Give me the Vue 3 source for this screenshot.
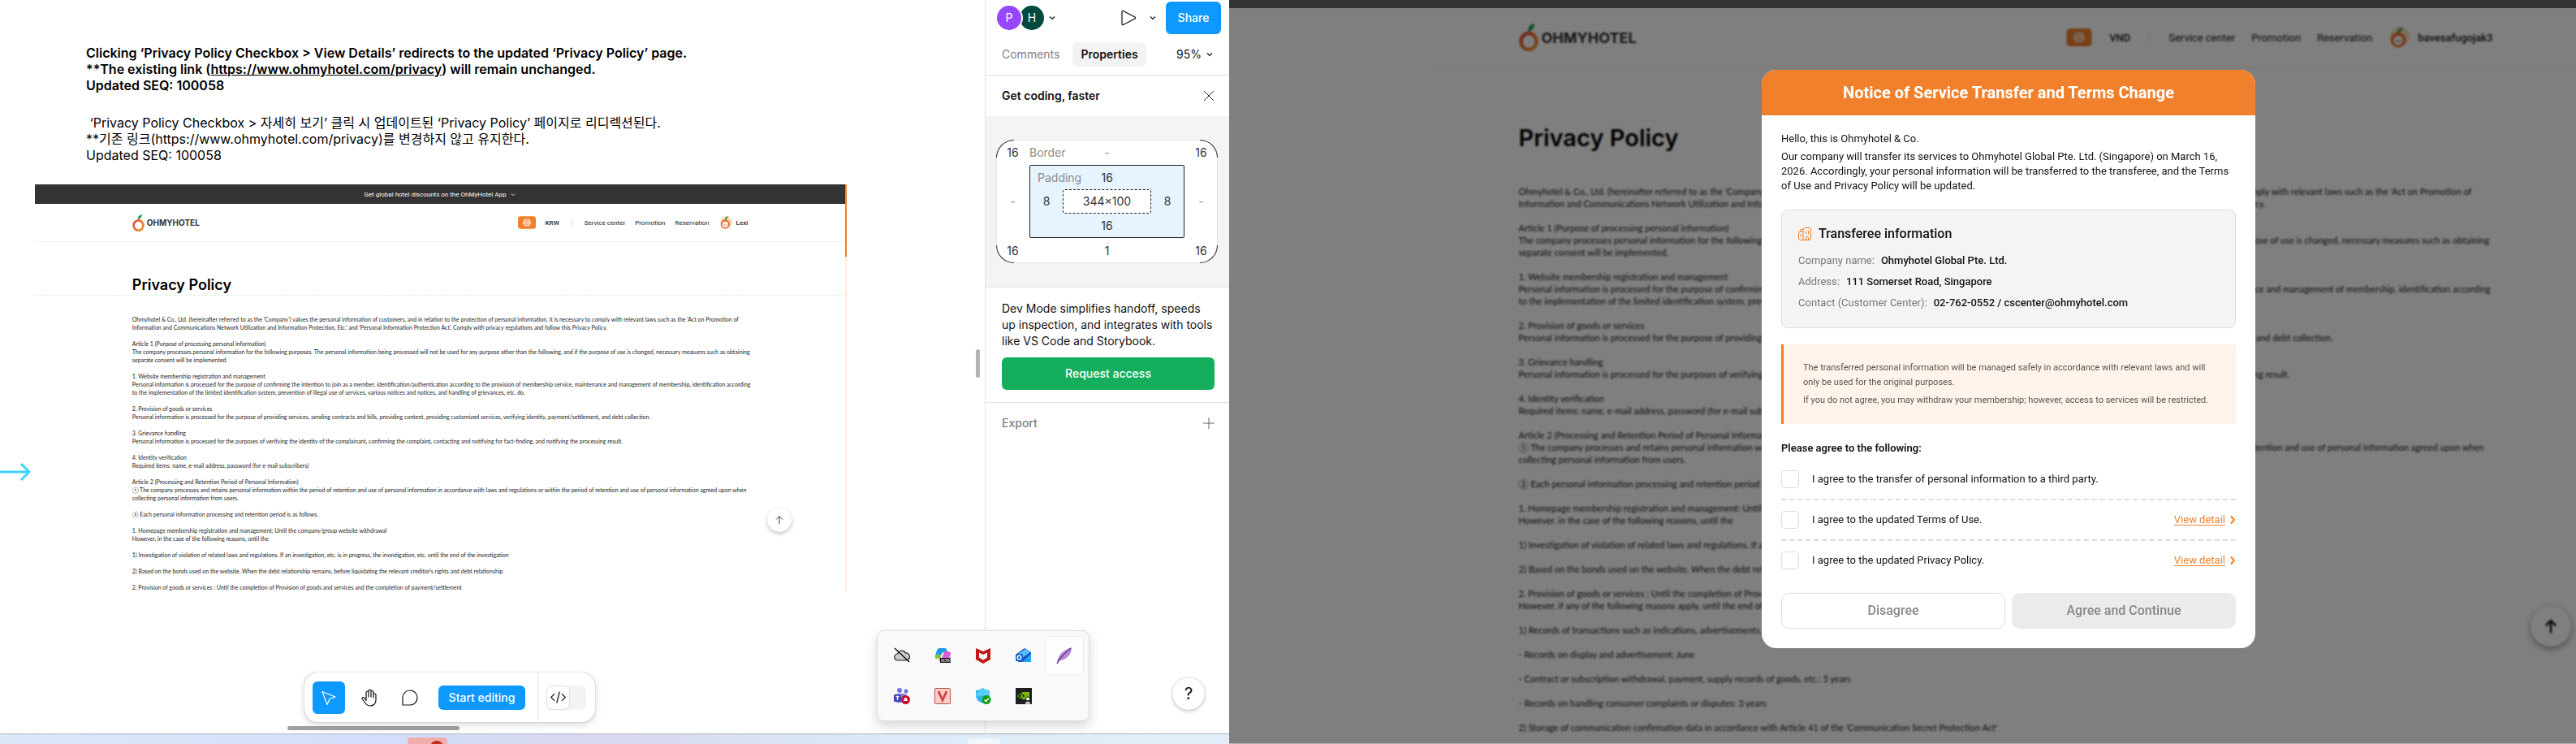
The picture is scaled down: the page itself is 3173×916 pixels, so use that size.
<script setup>
import { ref, computed } from 'vue';

const policyLines = [
  "Ohmyhotel & Co., Ltd. (hereinafter referred to as the 'Company') values the personal information of customers, and in relation to the protection of personal information, it is necessary to comply with relevant laws such as the 'Act on Promotion of",
  "Information and Communications Network Utilization and Information Protection, Etc.' and 'Personal Information Protection Act'. Comply with privacy regulations and follow this Privacy Policy.",
  "",
  "Article 1 (Purpose of processing personal information)",
  "The company processes personal information for the following purposes. The personal information being processed will not be used for any purpose other than the following, and if the purpose of use is changed, necessary measures such as obtaining",
  "separate consent will be implemented.",
  "",
  "1. Website membership registration and management",
  "Personal information is processed for the purpose of confirming the intention to join as a member, identification/authentication according to the provision of membership service, maintenance and management of membership, identification according",
  "to the implementation of the limited identification system, prevention of illegal use of services, various notices and notices, and handling of grievances, etc. do.",
  "",
  "2. Provision of goods or services",
  "Personal information is processed for the purpose of providing services, sending contracts and bills, providing content, providing customized services, verifying identity, payment/settlement, and debt collection.",
  "",
  "3. Grievance handling",
  "Personal information is processed for the purposes of verifying the identity of the complainant, confirming the complaint, contacting and notifying for fact-finding, and notifying the processing result.",
  "",
  "4. Identity verification",
  "Required items: name, e-mail address, password (for e-mail subscribers)",
  "",
  "Article 2 (Processing and Retention Period of Personal Information)",
  "① The company processes and retains personal information within the period of retention and use of personal information in accordance with laws and regulations or within the period of retention and use of personal information agreed upon when",
  "collecting personal information from users.",
  "",
  "② Each personal information processing and retention period is as follows.",
  "",
  "1. Homepage membership registration and management: Until the company/group website withdrawal",
  "However, in the case of the following reasons, until the",
  "",
  "1) Investigation of violation of related laws and regulations. If an investigation, etc. is in progress, the investigation, etc. until the end of the investigation",
  "",
  "2) Based on the bonds used on the website. When the debt relationship remains, before liquidating the relevant creditor's rights and debt relationship",
  "",
  "2. Provision of goods or services : Until the completion of Provision of goods and services and the completion of payment/settlement",
  "However, if any of the following reasons apply, until the end of the period",
  "",
  "1) Records of transactions such as indications, advertisements, contracts",
  "",
  "- Records on display and advertisement: June",
  "",
  "- Contract or subscription withdrawal, payment, supply records of goods, etc.: 5 years",
  "",
  "- Records on handling consumer complaints or disputes: 3 years",
  "",
  "2) Storage of communication confirmation data in accordance with Article 41 of the 'Communication Secret Protection Act'"
];

const previewText = computed(() => policyLines.slice(0, 34).join('\n'));
const fullText = computed(() => policyLines.join('\n'));

const navLinks = ['Service center', 'Promotion', 'Reservation'];

const transferee = [
  { label: 'Company name:', value: 'Ohmyhotel Global Pte. Ltd.' },
  { label: 'Address:', value: '111 Somerset Road, Singapore' },
  { label: 'Contact (Customer Center):', value: '02-762-0552 / cscenter@ohmyhotel.com' }
];

const agreements = ref([
  { id: 'transfer', text: 'I agree to the transfer of personal information to a third party.', detail: false, checked: false },
  { id: 'terms', text: 'I agree to the updated Terms of Use.', detail: true, checked: false },
  { id: 'privacy', text: 'I agree to the updated Privacy Policy.', detail: true, checked: false }
]);

const allAgreed = computed(() => agreements.value.every((item) => item.checked));
</script>

<template>
  <div class="desktop">
    <!-- shared logo symbols -->
    <svg class="symbols" aria-hidden="true">
      <defs>
        <linearGradient id="peel" x1="0" y1="0" x2="1" y2="1">
          <stop offset="0" stop-color="#e2483a" />
          <stop offset="1" stop-color="#f49a2c" />
        </linearGradient>
        <symbol id="orange" viewBox="0 0 24 34">
          <ellipse cx="12" cy="22" rx="9.5" ry="10" fill="none" stroke="url(#peel)" stroke-width="4.5" />
          <path d="M11 9C11 4 14 1 19 0C19 5 17 8 12 10Z" fill="#1f9b50" />
        </symbol>
        <symbol id="globe" viewBox="0 0 34 24">
          <rect width="34" height="24" rx="5" fill="#f0802b" />
          <circle cx="17" cy="12" r="7.5" fill="#fff" />
          <path d="M9.500 12H24.500M17 4.500V19.500M10.500 8.500H23.500M10.500 15.500H23.500" stroke="#f0802b" stroke-width="1" />
          <ellipse cx="17" cy="12" rx="3.500" ry="7.500" fill="none" stroke="#f0802b" stroke-width="1" />
        </symbol>
        <symbol id="face" viewBox="0 0 24 24">
          <circle cx="13" cy="11" r="11" fill="#fbd9b8" />
          <circle cx="11" cy="15" r="8.500" fill="#f06a2b" />
          <circle cx="11" cy="15.500" r="5.500" fill="#fff3ea" />
          <path d="M8.500 16q1 1.500 2 0M12 16q1 1.500 2 0" fill="none" stroke="#444" stroke-width="1" />
          <path d="M10 7C10 3 12 1 16 0C16 4 14 6 11 8Z" fill="#5aa545" />
        </symbol>
      </defs>
    </svg>

    <section class="editor">
      <div class="workspace">
        <main class="canvas">
          <div class="note bold">
            <p>Clicking ‘Privacy Policy Checkbox &gt; View Details’ redirects to the updated ‘Privacy Policy’ page.</p>
            <p>**The existing link (<a href="#">https://www.ohmyhotel.com/privacy</a>) will remain unchanged.</p>
            <p>Updated SEQ: 100058</p>
          </div>
          <div class="note">
            <p>&nbsp;‘Privacy Policy Checkbox &gt; 자세히 보기’ 클릭 시 업데이트된 ‘Privacy Policy’ 페이지로 리디렉션된다.</p>
            <p>**기존 링크(https://www.ohmyhotel.com/privacy)를 변경하지 않고 유지한다.</p>
            <p>Updated SEQ: 100058</p>
          </div>

          <div class="frame">
            <div class="site small">
              <div class="promo-bar">Get global hotel discounts on the OhMyHotel App
                <svg viewBox="0 0 8 6"><path d="M1 1.500L4 4.500L7 1.500" /></svg>
              </div>
              <header class="site-header">
                <div class="site-inner">
                  <span class="logo"><svg><use href="#orange" /></svg>OHMYHOTEL</span>
                  <nav>
                    <svg class="globe"><use href="#globe" /></svg>
                    <b>KRW</b>
                    <i class="divider"></i>
                    <a v-for="link in navLinks" :key="link" href="#">{{ link }}</a>
                    <span class="user"><svg class="face"><use href="#face" /></svg>Lexi</span>
                  </nav>
                </div>
              </header>
              <div class="article">
                <h2 class="site-inner">Privacy Policy</h2>
                <p class="site-inner policy">{{ previewText }}</p>
              </div>
              <button class="to-top" aria-label="Back to top">
                <svg viewBox="0 0 16 16"><path d="M8 14V3M3.500 7.500L8 3L12.500 7.500" /></svg>
              </button>
            </div>
          </div>

          <svg class="arrow" viewBox="0 0 38 24"><path d="M0 12H36M26 2L36 12L26 22" /></svg>
          <div class="scroll-y"></div>
          <div class="scroll-x"></div>

          <div class="toolbar">
            <button class="tool active" aria-label="Move">
              <svg viewBox="0 0 24 24"><path d="M4 4.500L20 11L13 13.500L10 20.500Z" /></svg>
            </button>
            <button class="tool" aria-label="Hand">
              <svg viewBox="0 0 24 24"><path d="M8 13V5.500a1.500 1.500 0 0 1 3 0V11V3.500a1.500 1.500 0 0 1 3 0V11V5a1.500 1.500 0 0 1 3 0V12V8.500a1.500 1.500 0 0 1 3 0V15c0 4-3 7-7 7c-3 0-4.500-1-6-3.500L3 13.500c-.5-1.500 1.500-2.500 2.500-1.500L8 15.500Z" /></svg>
            </button>
            <button class="tool" aria-label="Comment">
              <svg viewBox="0 0 24 24"><path d="M3 21V12a9 9 0 1 1 9 9Z" /></svg>
            </button>
            <button class="start">Start editing</button>
            <i></i>
            <button class="dev" aria-label="Dev Mode">
              <span><svg viewBox="0 0 24 24"><path d="M7 7L2 12L7 17M17 7L22 12L17 17M14 4L10 20" /></svg></span>
            </button>
          </div>
        </main>

        <aside class="sidebar">
          <div class="side-head">
            <div class="row">
              <span class="avatar p">P</span>
              <span class="avatar h">H</span>
              <svg class="chev" viewBox="0 0 8 8"><path d="M1 2.500L4 5.500L7 2.500" /></svg>
              <button class="play" aria-label="Present">
                <svg viewBox="0 0 20 20"><path d="M2 2.500Q2 .8 3.500 1.500L18 9Q19 10 18 11L3.500 18.500Q2 19.200 2 17.500Z" /></svg>
              </button>
              <svg class="chev" viewBox="0 0 8 8"><path d="M1 2.500L4 5.500L7 2.500" /></svg>
              <button class="share">Share</button>
            </div>
            <div class="row tabs">
              <button>Comments</button>
              <button class="on">Properties</button>
              <button class="zoom">95%
                <svg class="chev" viewBox="0 0 8 8"><path d="M1 2.500L4 5.500L7 2.500" /></svg>
              </button>
            </div>
          </div>

          <div class="side-title">
            <strong>Get coding, faster</strong>
            <button aria-label="Close"><svg viewBox="0 0 14 14"><path d="M1 1L13 13M13 1L1 13" /></svg></button>
          </div>

          <div class="box-area">
            <div class="box-model">
              <i class="corner tl"></i><i class="corner tr"></i><i class="corner bl"></i><i class="corner br"></i>
              <span>16</span>
              <div class="border-row"><em>Border</em><em>-</em></div>
              <span>16</span>
              <em>-</em>
              <div class="padding-box">
                <div class="padding-row"><em>Padding</em><span>16</span></div>
                <span>8</span>
                <span class="size">344×100</span>
                <span>8</span>
                <div class="padding-row"><i></i><span>16</span></div>
              </div>
              <em>-</em>
              <span>16</span>
              <span>1</span>
              <span>16</span>
            </div>
          </div>

          <div class="handoff">
            <p>Dev Mode simplifies handoff, speeds up inspection, and integrates with tools like VS Code and Storybook.</p>
            <button>Request access</button>
          </div>

          <div class="export">
            <span>Export</span>
            <button aria-label="Add export"><svg viewBox="0 0 14 14"><path d="M7 0V14M0 7H14" /></svg></button>
          </div>
        </aside>

        <div class="tray">
          <span><svg viewBox="0 0 20 20"><path d="M5 16a4 4 0 0 1-.5-8A5.500 5.500 0 0 1 14.500 7A4.500 4.500 0 0 1 15.500 16Z" fill="#c9c9c9" stroke="#222" stroke-width="1.2" /><path d="M1 1L19 18" stroke="#111" stroke-width="1.5" /></svg></span>
          <span><svg viewBox="0 0 20 20">
            <path d="M6 1H13Q15 1 15.500 5L11 6Q9 6 8 11L7 14H3Q0 14 1 10L3 4Q4 1 6 1Z" fill="#1c9be8" />
            <path d="M1 9L8 9L7 14H3Q0 14 1 9Z" fill="#8fc33a" />
            <path d="M12 5H17Q20 5 20 8L18 14H9Z" fill="#d85bd5" />
            <path d="M5 14H10L8 18Q6 18 5 14Z" fill="#f59a2e" />
            <rect x="7" y="13" width="13" height="6" fill="#111" /><text x="8" y="18" font-size="5" fill="#fff">M365</text></svg></span>
          <span><svg viewBox="0 0 20 20"><path d="M1 1L10 5L19 1V15L10 20L1 15ZM5 6.500V12.500L10 15.500L15 12.500V6.500L10 9Z" fill="#c01818" fill-rule="evenodd" /></svg></span>
          <span><svg viewBox="0 0 20 20"><path d="M1 8L11 1L19 6V18H3Z" fill="#1d4fc4" /><path d="M3 8L12 2L18 6L8 13Z" fill="#4fc3ff" /><path d="M8 18L19 8V18Z" fill="#27a3f5" /><rect x="0" y="8" width="9" height="9" rx="1.500" fill="#0f5fd0" /><circle cx="4.500" cy="12.500" r="2.300" fill="none" stroke="#fff" stroke-width="1.400" /></svg></span>
          <span class="hover"><svg viewBox="0 0 20 20"><path d="M1 19C2 9 8 4 19 0C19 10 12 15 3 17Z" fill="#b08ad0" /><path d="M1 20Q6 10 18 1" fill="none" stroke="#7a2fa8" stroke-width="1.500" /></svg></span>
          <span><svg viewBox="0 0 20 20"><circle cx="7" cy="3" r="3" fill="#6f74e0" /><circle cx="15" cy="4" r="2.500" fill="#6f74e0" /><rect x="2" y="7" width="14" height="11" rx="3" fill="#7b83eb" /><rect x="0" y="8" width="9" height="9" rx="1" fill="#3f45b5" /><path d="M2.500 10.500H6.500M4.500 10.500V15" stroke="#fff" stroke-width="1.300" /><circle cx="14.500" cy="14.500" r="5.500" fill="#c8102e" /><path d="M11.500 16Q13 15 13 13Q14.500 10.500 16 13Q16 15 17.500 16Z" fill="#fff" /></svg></span>
          <span><svg viewBox="0 0 20 20"><rect x=".5" y=".5" width="19" height="19" rx="1.500" fill="#f6cfcb" stroke="#c0504a" /><path d="M5 4L10 15L15 4" fill="none" stroke="#d0473f" stroke-width="3" /></svg></span>
          <span><svg viewBox="0 0 20 20"><path d="M1 3Q6 3 9.500 0Q13 3 18 3V9Q18 16 9.500 19Q1 16 1 9Z" fill="#2cb5f5" /><path d="M9.500 0Q13 3 18 3V9L1 10V8Z" fill="#56cdfb" /><circle cx="14" cy="14.500" r="5.500" fill="#16a012" /><path d="M11.500 14.500L13.500 16.500L16.800 12.800" fill="none" stroke="#fff" stroke-width="1.500" /></svg></span>
          <span><svg viewBox="0 0 20 20"><rect width="20" height="20" fill="#1e1e1e" /><path d="M8 5H17V14H8Z" fill="#76b900" /><path d="M2 10Q7 4 12 10Q7 15 2 10Z" fill="#1e1e1e" stroke="#76b900" /><circle cx="7.500" cy="10" r="1.600" fill="#76b900" /><circle cx="15" cy="13.500" r="2.500" fill="#fff" stroke="#111" /><path d="M11 20Q11 16.500 15 16.500Q19 16.500 19 20Z" fill="#fff" stroke="#111" /></svg></span>
        </div>
        <button class="help" aria-label="Help">?</button>
      </div>
      <footer class="taskbar">
        <span class="task red"><i></i></span>
        <span class="task"></span>
      </footer>
    </section>

    <section class="browser">
      <div class="strip"></div>
      <div class="viewport">
        <div class="site large">
          <header class="site-header">
            <div class="site-inner">
              <span class="logo"><svg><use href="#orange" /></svg>OHMYHOTEL</span>
              <nav>
                <svg class="globe"><use href="#globe" /></svg>
                <b>VND</b>
                <i class="divider"></i>
                <a v-for="link in navLinks" :key="link" href="#">{{ link }}</a>
                <span class="user"><svg class="face"><use href="#face" /></svg>bavesafugojak3</span>
              </nav>
            </div>
          </header>
          <div class="article">
            <h1 class="site-inner">Privacy Policy</h1>
            <p class="site-inner policy">{{ fullText }}</p>
          </div>
          <button class="to-top" aria-label="Back to top">
            <svg viewBox="0 0 16 16"><path d="M8 14V3M3.500 7.500L8 3L12.500 7.500" /></svg>
          </button>
        </div>

        <div class="overlay">
          <div class="modal" role="dialog" aria-labelledby="modal-title">
            <h2 id="modal-title">Notice of Service Transfer and Terms Change</h2>
            <div class="modal-body">
              <p>Hello, this is Ohmyhotel &amp; Co.</p>
              <p>Our company will transfer its services to Ohmyhotel Global Pte. Ltd. (Singapore) on March 16,<br />2026. Accordingly, your personal information will be transferred to the transferee, and the Terms<br />of Use and Privacy Policy will be updated.</p>

              <div class="info">
                <h3>
                  <svg viewBox="0 0 16 16"><path d="M6 15.500V3Q6 .5 8.500 .5H13Q15.500 .5 15.500 3V13Q15.500 15.500 13 15.500H3Q.5 15.500 .5 13V7Q.5 5 2.500 5H6M2.500 5V4Q2.500 2.500 4 2.500H6M3.200 8V12M9.500 4V8.500M12.500 4V8.500M9.500 15V12.500Q9.500 11.500 11 11.500T12.500 12.500V15" /></svg>
                  Transferee information
                </h3>
                <dl>
                  <div v-for="row in transferee" :key="row.label">
                    <dt>{{ row.label }}</dt>
                    <dd>{{ row.value }}</dd>
                  </div>
                </dl>
              </div>

              <div class="warning">
                <p>The transferred personal information will be managed safely in accordance with relevant laws and will<br />only be used for the original purposes.</p>
                <p>If you do not agree, you may withdraw your membership; however, access to services will be restricted.</p>
              </div>

              <h4>Please agree to the following:</h4>
              <ul>
                <li v-for="item in agreements" :key="item.id">
                  <input :id="item.id" v-model="item.checked" type="checkbox" />
                  <label :for="item.id">{{ item.text }}</label>
                  <a v-if="item.detail" href="#"><span>View detail</span>
                    <svg viewBox="0 0 8 12"><path d="M2 1.500L6 6L2 10.500" /></svg>
                  </a>
                </li>
              </ul>

              <div class="actions">
                <button>Disagree</button>
                <button class="agree" :disabled="!allAgreed">Agree and Continue</button>
              </div>
            </div>
          </div>
        </div>
      </div>
    </section>
  </div>
</template>

<style>
body {
  margin: 0;
}
</style>

<style scoped>
* {
  box-sizing: border-box;
}

p, h1, h2, h3, h4, ul, dl, dd {
  margin: 0;
  padding: 0;
}

button {
  border: 0;
  padding: 0;
  background: none;
  font: inherit;
  color: inherit;
}

svg {
  fill: none;
  display: block;
}

em, i {
  font-style: normal;
}

.symbols {
  position: absolute;
  width: 0;
  height: 0;
}

.desktop {
  display: flex;
  min-height: 100vh;
  font-family: Inter, "Noto Sans CJK KR", sans-serif;
  color: #111;
  background: #fff;
}

.editor {
  flex: 1514 1 0;
  min-width: 0;
  display: flex;
  flex-direction: column;
}

.workspace {
  position: relative;
  flex: 1;
  display: flex;
}

.canvas {
  position: relative;
  flex: 1;
  min-width: 0;
  padding-top: 55px;
}

/* designer notes */
.note {
  margin: 0 0 26px 106px;
  font-size: 16px;
  line-height: 20px;
  white-space: nowrap;
  color: #000;
}

.note a {
  color: inherit;
}

.note.bold {
  font-weight: 600;
}

.frame {
  margin: 26px 170px 0 43px;
  padding-right: 2px;
  background: linear-gradient(#f0802b 89px, #fdeadd 89px);
}

/* site pages */
.site {
  position: relative;
  background: #fff;
}

.site .site-inner {
  margin-left: auto;
  margin-right: auto;
}

.site-header .site-inner, .site-header nav, .logo, .user {
  display: flex;
  align-items: center;
}

.site-header .site-inner {
  height: 100%;
  justify-content: space-between;
}

.logo {
  font-weight: 700;
  color: #333;
}

.site-header nav {
  font-family: Roboto, sans-serif;
  color: #222;
}

.site-header nav b, .user {
  font-weight: 500;
}

.site-header nav a {
  color: inherit;
  text-decoration: none;
}

.divider {
  width: 1px;
  background: #ddd;
}

.policy {
  font-family: Lato, "Noto Sans CJK KR", sans-serif;
  white-space: pre;
  color: #222;
}

.to-top {
  position: absolute;
  display: flex;
  align-items: center;
  justify-content: center;
  border-radius: 50%;
  background: #fff;
}

.to-top svg {
  stroke: #222;
}

.small .promo-bar {
  height: 24px;
  display: flex;
  align-items: center;
  justify-content: center;
  gap: 6px;
  font-family: Roboto, sans-serif;
  font-size: 8px;
  color: #fff;
  background: #333;
}

.promo-bar svg {
  width: 6px;
  height: 5px;
  stroke: #fff;
}

.small .site-inner {
  width: 76%;
}

.small .site-header {
  height: 47px;
  border-bottom: 1px solid #eee;
}

.small .logo {
  gap: 3px;
  font-size: 10px;
}

.small .logo svg {
  width: 15px;
  height: 21px;
}

.small nav {
  gap: 12px;
  font-size: 8px;
}

.small .user {
  gap: 5px;
}

.small .globe {
  width: 22px;
  height: 16px;
}

.small .face {
  width: 16px;
  height: 16px;
}

.small .divider {
  height: 8px;
  margin: 0 3px;
}

.small .article {
  padding-top: 41px;
}

.small .article::before {
  content: "";
  position: absolute;
  left: 0;
  right: 0;
  top: 136px;
  border-top: 1px dashed #d6f5d3;
}

.small h2 {
  font-size: 18px;
  line-height: 24px;
  font-weight: 600;
  color: #000;
}

.small .policy {
  margin-top: 25px;
  font-size: 7px;
  line-height: 10px;
}

.small .to-top {
  right: 66px;
  bottom: 73px;
  width: 30px;
  height: 30px;
  box-shadow: 0 2px 5px rgba(0, 0, 0, 0.25);
}

.small .to-top svg {
  width: 14px;
  height: 14px;
}

.arrow {
  position: absolute;
  left: 0;
  top: 569px;
  width: 38px;
  height: 24px;
  stroke: #3dd3ff;
  stroke-width: 3;
}

.scroll-y, .scroll-x {
  position: absolute;
  border-radius: 3px;
  background: #b3b3b3;
}

.scroll-y {
  right: 6px;
  top: 430px;
  width: 5px;
  height: 35px;
}

.scroll-x {
  left: 354px;
  bottom: 4px;
  width: 212px;
  height: 5px;
  background: #a0a0a0;
}

.toolbar {
  position: absolute;
  left: 375px;
  bottom: 14px;
  height: 61px;
  display: flex;
  align-items: center;
  gap: 10px;
  padding: 0 11px 0 10px;
  border-radius: 16px;
  background: #fff;
  box-shadow: 0 0 1px rgba(0, 0, 0, 0.5), 0 3px 8px rgba(0, 0, 0, 0.16);
}

.tool {
  width: 40px;
  height: 40px;
  display: flex;
  align-items: center;
  justify-content: center;
  border-radius: 6px;
}

.tool svg {
  width: 24px;
  height: 24px;
  stroke: #111;
  stroke-width: 1.2;
  stroke-linejoin: round;
}

.tool.active {
  background: #0d99ff;
}

.tool.active svg {
  stroke: #fff;
}

.start {
  width: 107px;
  height: 30px;
  margin-left: 5px;
  border-radius: 6px;
  font-size: 14px;
  font-weight: 500;
  color: #fff;
  background: #0d99ff;
}

.toolbar i {
  align-self: stretch;
  width: 1px;
  margin-left: 5px;
  background: #e6e6e6;
}

.dev {
  width: 49px;
  height: 30px;
  border-radius: 7px;
  background: #f3f3f3;
}

.dev span {
  width: 29px;
  height: 30px;
  display: flex;
  align-items: center;
  justify-content: center;
  border: 1px solid #ddd;
  border-radius: 7px;
  background: #fff;
}

.dev svg {
  width: 21px;
  height: 21px;
  stroke: #222;
  stroke-width: 1.5;
}

/* properties sidebar */
.sidebar {
  width: 301px;
  border-left: 1px solid #e2e2e2;
  background: #fff;
  font-size: 14px;
  line-height: 20px;
}

.side-head {
  padding: 2px 10px 10px 14px;
  border-bottom: 1px solid #e2e2e2;
}

.row {
  display: flex;
  align-items: center;
}

.avatar {
  width: 30px;
  height: 30px;
  border-radius: 50%;
  line-height: 30px;
  text-align: center;
  color: #fff;
}

.avatar.p {
  z-index: 1;
  background: #9747ff;
  box-shadow: 2px 0 0 #fff;
}

.avatar.h {
  margin-left: -2px;
  background: #04493d;
}

.chev {
  width: 8px;
  height: 8px;
  margin-left: 6px;
  stroke: #111;
  stroke-width: 1.2;
}

.play {
  margin-left: auto;
  margin-right: 10px;
}

.play svg {
  width: 20px;
  height: 20px;
  stroke: #111;
  stroke-width: 1.2;
}

.share {
  width: 68px;
  height: 40px;
  margin-left: 12px;
  border-radius: 6px;
  font-weight: 500;
  color: #fff;
  background: #0d99ff;
}

.tabs {
  margin-top: 10px;
}

.tabs button {
  height: 30px;
  padding: 0 6px;
  color: #808080;
}

.tabs .on {
  margin-left: 10px;
  padding: 0 10px;
  border-radius: 6px;
  font-weight: 600;
  color: #111;
  background: #f3f3f3;
}

.tabs .zoom {
  display: flex;
  align-items: center;
  margin-left: auto;
  padding-right: 10px;
  color: #111;
}

.side-title, .export {
  height: 50px;
  display: flex;
  align-items: center;
  justify-content: space-between;
  padding: 0 18px 0 20px;
}

.side-title strong {
  font-weight: 600;
}

.side-title svg, .export svg {
  width: 14px;
  height: 14px;
  stroke: #222;
}

.box-area {
  padding: 29px 14px 29px 13px;
  border-bottom: 1px solid #e2e2e2;
  background: #f4f4f4;
}

.box-model {
  position: relative;
  display: grid;
  grid-template-columns: 41px 1fr 41px;
  grid-template-rows: 31px 90px 31px;
  border-radius: 22px;
  background: #fff;
  box-shadow: inset 0 0 0 1px #e2e2e2;
  color: #333;
  align-items: center;
  text-align: center;
}

.box-model em {
  color: #8c8c8c;
}

.corner {
  position: absolute;
  width: 22px;
  height: 22px;
  border: 0 solid #333;
}

.tl {
  left: 0;
  top: 0;
  border-width: 1px 0 0 1px;
  border-radius: 22px 0 0 0;
}

.tr {
  right: 0;
  top: 0;
  border-width: 1px 1px 0 0;
  border-radius: 0 22px 0 0;
}

.bl {
  left: 0;
  bottom: 0;
  border-width: 0 0 1px 1px;
  border-radius: 0 0 0 22px;
}

.br {
  right: 0;
  bottom: 0;
  border-width: 0 1px 1px 0;
  border-radius: 0 0 22px 0;
}

.border-row, .padding-row {
  display: grid;
  grid-template-columns: 1fr 1fr 1fr;
}

.border-row em:first-child {
  text-align: left;
}

.padding-box {
  height: 90px;
  display: grid;
  grid-template-columns: 40px 1fr 40px;
  grid-template-rows: 29px 30px 29px;
  align-items: center;
  border: 1px solid #222;
  border-radius: 2px;
  background: #e5f4ff;
}

.padding-row {
  grid-column: 1 / 4;
}

.padding-row em {
  padding-left: 9px;
  text-align: left;
}

.size {
  height: 30px;
  line-height: 28px;
  border: 1px dashed #222;
  border-radius: 3px;
  background: #fff;
}

.handoff {
  padding: 16px 18px 15px 20px;
  border-bottom: 1px solid #e2e2e2;
}

.handoff button {
  width: 100%;
  height: 40px;
  margin-top: 10px;
  border-radius: 6px;
  font-weight: 500;
  color: #fff;
  background: #14ae5c;
}

.export {
  font-weight: 500;
  color: #808080;
}

.export svg {
  stroke: #666;
}

/* system tray flyout */
.tray {
  position: absolute;
  right: 172px;
  bottom: 15px;
  display: grid;
  grid-template-columns: repeat(5, 50px);
  grid-auto-rows: 50px;
  padding: 5px;
  border: 1px solid #dcdcdc;
  border-radius: 9px;
  background: #f9f9f9;
  box-shadow: 0 6px 14px rgba(0, 0, 0, 0.16);
}

.tray span {
  display: flex;
  align-items: center;
  justify-content: center;
}

.tray svg {
  width: 20px;
  height: 20px;
}

.tray .hover {
  margin: 1px;
  border: 1px solid #ececec;
  border-radius: 4px;
  background: #fdfdfd;
}

.help {
  position: absolute;
  right: 30px;
  bottom: 29px;
  width: 40px;
  height: 40px;
  border-radius: 50%;
  font-size: 20px;
  background: #fff;
  box-shadow: 0 0 1px rgba(0, 0, 0, 0.4), 0 2px 5px rgba(0, 0, 0, 0.18);
}

.taskbar {
  height: 13px;
  display: flex;
  align-items: flex-end;
  gap: 641px;
  padding-left: 502px;
  border-top: 1px solid #aeb4c4;
  background: linear-gradient(90deg, #dbe8f8, #d3defa 30%, #d8d8ee 50%, #dcebf7 75%, #e3eef8);
  overflow: hidden;
}

.task {
  width: 40px;
  height: 7px;
  border-radius: 4px 4px 0 0;
  background: #f1f6fc;
}

.task.red {
  width: 49px;
  height: 8px;
  background: #eeaeae;
}

.task i {
  display: block;
  width: 16px;
  height: 16px;
  margin: 4px 0 0 28px;
  border-radius: 50%;
  background: #c42b1c;
}

/* live page behind the notice */
.browser {
  flex: 1659 1 0;
  min-width: 0;
  display: flex;
  flex-direction: column;
  border-bottom: 1px solid #b4b4bb;
}

.strip {
  height: 10px;
  background: #333;
}

.viewport {
  position: relative;
  flex: 1;
  overflow: hidden;
}

.large {
  height: 100%;
  padding-left: 254px;
}

.large .site-inner {
  max-width: 1200px;
}

.large .site-header {
  height: 73px;
  border-bottom: 1px solid #eee;
}

.large .logo {
  gap: 4px;
  font-size: 18px;
}

.large .logo svg {
  width: 24px;
  height: 34px;
}

.large nav {
  gap: 20px;
  font-size: 13px;
}

.large .user {
  gap: 10px;
}

.large .globe {
  width: 34px;
  height: 22px;
}

.large .face {
  width: 26px;
  height: 26px;
}

.large .divider {
  height: 14px;
  margin: 0 3px;
}

.large .article {
  padding-top: 67px;
}

.large h1 {
  font-size: 29px;
  line-height: 40px;
  font-weight: 600;
  color: #000;
}

.large .policy {
  margin-top: 38px;
  font-size: 11px;
  line-height: 15px;
}

.large .to-top {
  right: 6px;
  bottom: 119px;
  width: 50px;
  height: 50px;
  box-shadow: 0 3px 8px rgba(0, 0, 0, 0.4);
}

.large .to-top svg {
  width: 22px;
  height: 22px;
  stroke-width: 2;
}

.overlay {
  position: absolute;
  inset: 0;
  display: flex;
  justify-content: center;
  align-items: flex-start;
  padding: 76px 0 0 261px;
  background: rgba(0, 0, 0, 0.5);
  backdrop-filter: blur(1px);
}

/* notice dialog */
.modal {
  width: 608px;
  overflow: hidden;
  border-radius: 18px;
  background: #fff;
  font-family: Roboto, sans-serif;
  font-size: 13px;
  line-height: 18px;
}

.modal h2 {
  line-height: 56px;
  text-align: center;
  font-size: 20px;
  font-weight: 700;
  color: #fff;
  background: #f0802b;
}

.modal-body {
  padding: 20px 24px 24px;
}

.modal-body p + p {
  margin-top: 4px;
}

.info {
  margin-top: 20px;
  padding: 19px 20px 17px;
  border: 1px solid #ddd;
  border-radius: 8px;
  background: #f4f4f4;
}

.info h3 {
  display: flex;
  align-items: center;
  gap: 9px;
  margin-bottom: 10px;
  font-size: 16px;
  line-height: 20px;
  font-weight: 500;
}

.info h3 svg {
  width: 16px;
  height: 16px;
  stroke: #f0802b;
}

.info dl div {
  display: flex;
  gap: 8px;
  line-height: 26px;
}

.info dt {
  color: #777;
}

.info dd {
  font-weight: 500;
}

.warning {
  margin-top: 20px;
  padding: 20px 24px;
  border-left: 3px solid #f0802b;
  font-size: 11px;
  color: #555;
  background: #fff3ea;
}

.modal h4 {
  margin-top: 20px;
  font-size: 13px;
  line-height: 20px;
  font-weight: 600;
}

.modal ul {
  margin-top: 4px;
  list-style: none;
}

.modal li {
  height: 48px;
  display: flex;
  align-items: center;
  gap: 16px;
}

.modal li + li {
  height: 50px;
  border-top: 2px dashed #ddd;
}

.modal input {
  appearance: none;
  width: 22px;
  height: 22px;
  margin: 0;
  border: 1px solid #ddd;
  border-radius: 4px;
  background: #fff;
}

.modal input:checked {
  background: #f0802b;
}

.modal li a {
  display: flex;
  align-items: center;
  gap: 5px;
  margin-left: auto;
  color: #f0802b;
  text-decoration: none;
}

.modal li a span {
  text-decoration: underline;
  text-underline-offset: 2px;
}

.modal li svg {
  width: 8px;
  height: 12px;
  stroke: #f0802b;
  stroke-width: 2;
}

.actions {
  display: flex;
  gap: 8px;
  margin-top: 16px;
}

.actions button {
  flex: 1;
  height: 44px;
  border: 1px solid #ddd;
  border-radius: 10px;
  font-size: 16px;
  font-weight: 500;
  color: #888;
}

.actions .agree {
  border-color: #ebebeb;
  background: #ebebeb;
}
</style>
